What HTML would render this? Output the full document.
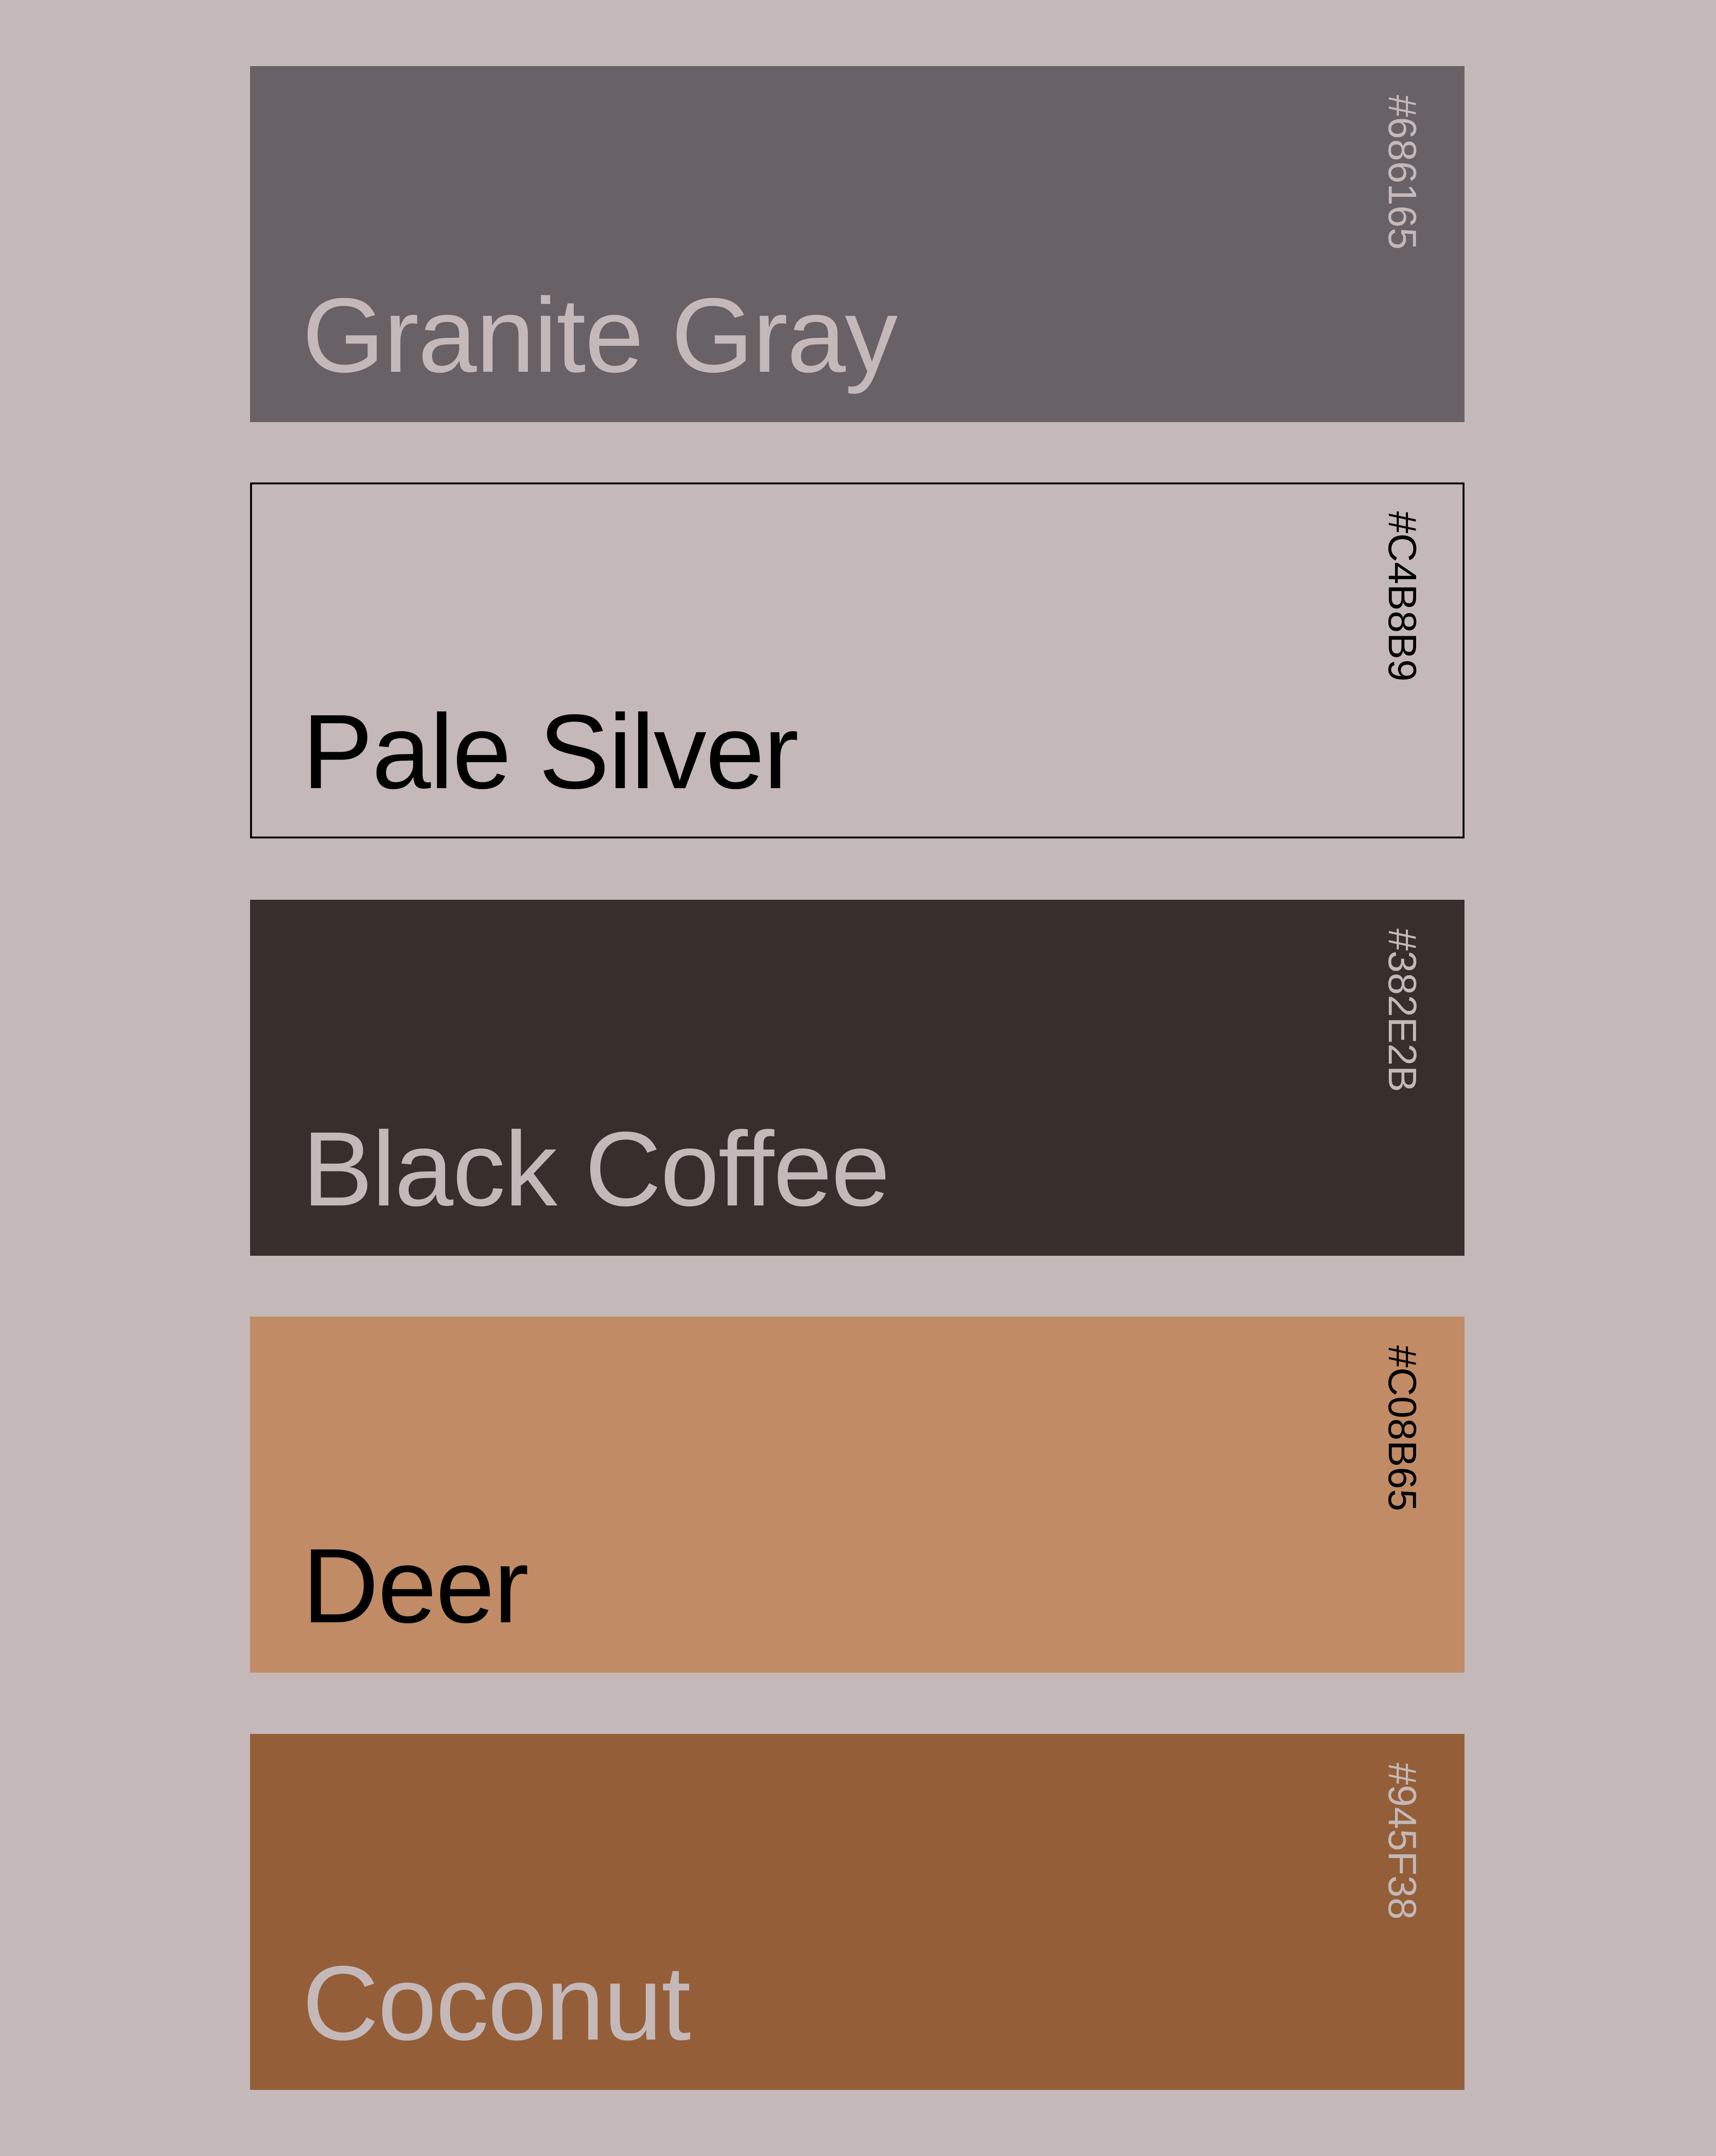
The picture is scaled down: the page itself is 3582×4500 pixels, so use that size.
<!DOCTYPE html>
<html><head><meta charset="utf-8"><style>
html,body{margin:0;padding:0;}
body{width:3582px;height:4500px;background:#C4B8B9;position:relative;overflow:hidden;font-family:"Liberation Sans",sans-serif;}
.b{position:absolute;left:522px;width:2535px;height:743px;box-sizing:border-box;}
.n{position:absolute;left:109px;top:0;font-size:221px;line-height:1;letter-spacing:-2px;white-space:nowrap;}
.h{position:absolute;left:2364px;top:60px;width:83px;font-size:83px;line-height:83px;writing-mode:vertical-rl;white-space:nowrap;}
</style></head><body>
<div class="b" style="top:138px;background:#686165;color:#C4B8B9">
 <div class="n" style="top:451px">Granite Gray</div>
 <div class="h">#686165</div>
</div>
<div class="b" style="top:1007px;border:4px solid #000;color:#000">
 <div class="n" style="top:447px;left:105px">Pale Silver</div>
 <div class="h" style="top:56px;left:2360px">#C4B8B9</div>
</div>
<div class="b" style="top:1878px;background:#382E2B;color:#C4B8B9">
 <div class="n" style="top:451px">Black Coffee</div>
 <div class="h">#382E2B</div>
</div>
<div class="b" style="top:2748px;background:#C08B65;color:#000">
 <div class="n" style="top:451px">Deer</div>
 <div class="h">#C08B65</div>
</div>
<div class="b" style="top:3619px;background:#945F38;color:#C4B8B9">
 <div class="n" style="top:451px">Coconut</div>
 <div class="h">#945F38</div>
</div>
</body></html>
